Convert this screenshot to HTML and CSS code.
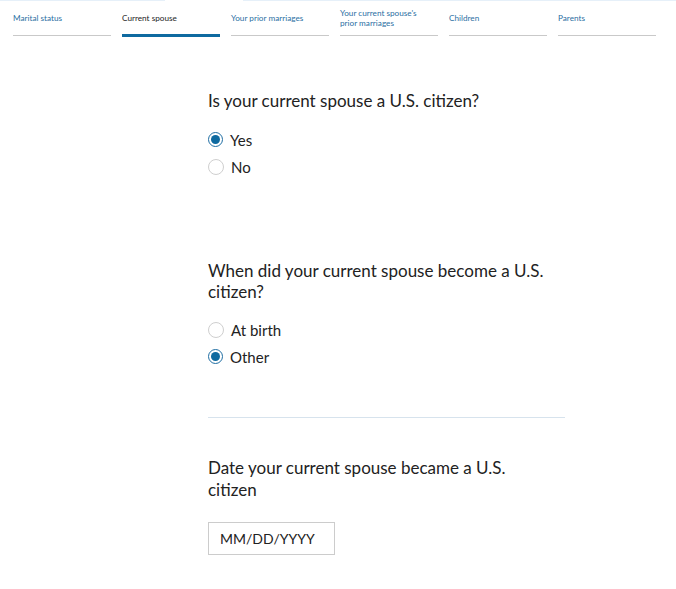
FILE: index.html
```html
<!DOCTYPE html>
<html lang="en">
<head>
    <meta charset="UTF-8">
    <meta name="viewport" content="width=device-width, initial-scale=1.0">
    <title>Current spouse</title>
    <link rel="stylesheet" href="styles.css">
</head>
<body>
    <div class="topline"></div>
    <nav class="steps">
        <a class="step" href="#">Marital status</a>
        <a class="step active" href="#">Current spouse</a>
        <a class="step" href="#">Your prior marriages</a>
        <a class="step" href="#">Your current spouse's prior marriages</a>
        <a class="step" href="#">Children</a>
        <a class="step" href="#">Parents</a>
    </nav>

    <main class="form">
        <fieldset class="question q-first">
            <legend>Is your current spouse a U.S. citizen?</legend>
            <label class="radio"><input type="radio" name="citizen" checked><span class="dot"></span>Yes</label>
            <label class="radio"><input type="radio" name="citizen"><span class="dot"></span>No</label>
        </fieldset>

        <fieldset class="question q-second">
            <legend>When did your current spouse become a U.S. citizen?</legend>
            <label class="radio"><input type="radio" name="when"><span class="dot"></span>At birth</label>
            <label class="radio"><input type="radio" name="when" checked><span class="dot"></span>Other</label>
        </fieldset>

        <hr class="divider">

        <div class="question q-third">
            <label class="field-label" for="date">Date your current spouse became a U.S. citizen</label>
            <input class="date" type="text" id="date" placeholder="MM/DD/YYYY">
        </div>
    </main>
</body>
</html>
```

FILE: styles.css
```css
body {
    font-family: 'Lato', 'Open Sans', sans-serif;
    background-color: #fff;
    color: #222;
    margin: 0;
    padding: 0;
}
.topline {
    height: 1px;
    background: linear-gradient(to right, #e6f0f9 0, #e6f0f9 165px, #fff 165px, #fff 243px, #e6f0f9 243px);
}
.steps {
    display: flex;
    gap: 11px;
    padding: 0 20px 0 13px;
}
.step {
    width: 98px;
    height: 34px;
    box-sizing: border-box;
    padding-right: 8px;
    display: flex;
    align-items: center;
    border-bottom: 1px solid #c9c9c9;
    font-size: 8.2px;
    line-height: 10px;
    color: #2b6fa3;
    text-decoration: none;
}
.step.active {
    color: #1e1e1e;
    border-bottom: 3px solid #0f6aa0;
    height: 36px;
}
.step:not(.active) {
    height: 35px;
    padding-bottom: 1px;
}
.form {
    width: 357px;
    margin-left: 208px;
    padding-top: 53px;
}
.question {
    border: none;
    margin: 0;
    padding: 0;
}
legend,
.field-label {
    display: block;
    padding: 0;
    font-size: 17px;
    line-height: 21px;
    color: #222;
    margin-bottom: 15px;
}
.q-second legend {
    margin-bottom: 14px;
}
.radio {
    display: flex;
    align-items: center;
    height: 27px;
    font-size: 15px;
    color: #222;
    cursor: pointer;
}
.radio input {
    display: none;
}
.dot {
    width: 14px;
    height: 14px;
    border: 1px solid #cfcfcf;
    border-radius: 50%;
    margin-right: 7px;
    display: flex;
    align-items: center;
    justify-content: center;
}
.radio input:checked + .dot {
    border: 1.5px solid #1f6ea3;
    width: 13px;
    height: 13px;
}
.radio input:checked + .dot::after {
    content: "";
    width: 9px;
    height: 9px;
    border-radius: 50%;
    background: #0f6aa0;
}
.q-second {
    margin-top: 80px;
}
.divider {
    border: none;
    border-top: 1px solid #d7e3ed;
    margin: 47px 0 0;
}
.q-third {
    padding-top: 39px;
}
.q-third .field-label {
    max-width: 340px;
    line-height: 22px;
    margin-bottom: 21px;
}
.date {
    width: 127px;
    height: 33px;
    box-sizing: border-box;
    border: 1px solid #cccccc;
    padding: 0 11px;
    font-family: inherit;
    font-size: 14px;
}
.date::placeholder {
    color: #222;
}
```
